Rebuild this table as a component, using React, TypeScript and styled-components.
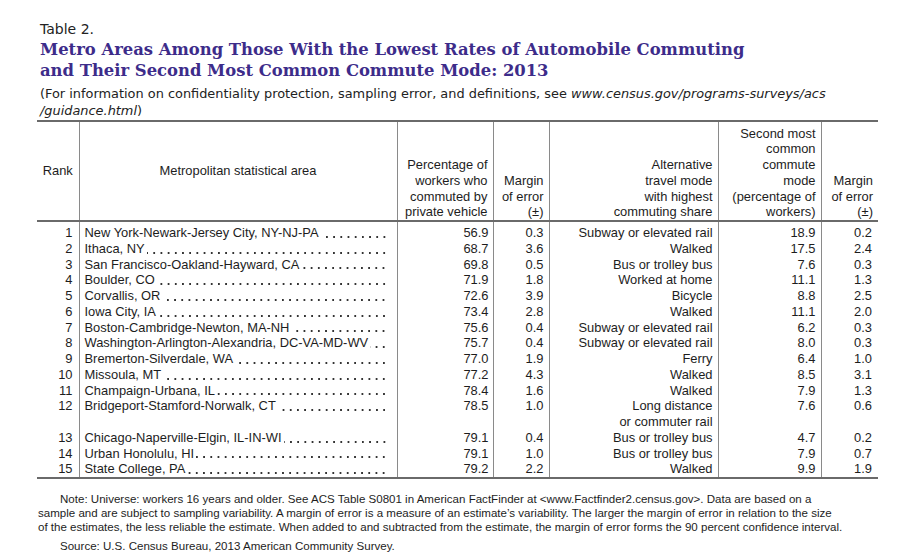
import React from "react";
import styled, { createGlobalStyle } from "styled-components";

const Global = createGlobalStyle`
  html, body { margin: 0; padding: 0; background: #ffffff; }
  body { font-family: "Liberation Sans", Arial, sans-serif; color: #1d1d1d; }
`;

const Page = styled.div`
  width: 920px;
  height: 558px;
  overflow: hidden;
  box-sizing: border-box;
  padding: 19px 0 0 37px;
`;

const Heading = styled.header`
  padding-left: 3px;
`;

const Label = styled.div`
  font-family: "DejaVu Sans", sans-serif;
  font-size: 14px;
  line-height: 20px;
  color: #222;
`;

const Title = styled.h1`
  margin: 0;
  font-family: "DejaVu Serif", serif;
  font-weight: bold;
  font-size: 16.4px;
  line-height: 21px;
  color: #3d2c8a;
`;

const Sub = styled.p`
  margin: 3.5px 0 0;
  font-family: "DejaVu Sans", sans-serif;
  font-size: 12.9px;
  line-height: 17px;
  color: #222;
  em { font-style: italic; }
`;

const Table = styled.table`
  margin-top: 1.5px;
  width: 841px;
  border-collapse: collapse;
  table-layout: fixed;
  border-top: 2px solid #6a6a6a;
  border-bottom: 2px solid #6a6a6a;
  font-size: 12.9px;
  line-height: 15.75px;
`;

const Col = styled.col<{ $w: number }>`
  width: ${(p) => p.$w}px;
`;

const HeadRow = styled.tr`
  border-bottom: 2px solid #6a6a6a;
`;

const Th = styled.th<{ $center?: boolean; $first?: boolean }>`
  height: 98px;
  padding: 0 ${(p) => (p.$center ? "0" : "5px")} 0 0;
  font-weight: normal;
  text-align: ${(p) => (p.$center ? "center" : "right")};
  vertical-align: ${(p) => (p.$center ? "middle" : "bottom")};
  border-left: ${(p) => (p.$first ? "none" : "1px solid #8a8a8a")};
`;

const Body = styled.tbody`
  tr:first-child td { padding-top: 3px; }
`;

const Td = styled.td<{ $first?: boolean; $pr?: number }>`
  padding: 0 ${(p) => p.$pr ?? 5}px 0 0;
  text-align: right;
  vertical-align: top;
  white-space: nowrap;
  border-left: ${(p) => (p.$first ? "none" : "1px solid #8a8a8a")};
`;

const AreaCell = styled.td`
  padding: 0 8px 0 5px;
  vertical-align: top;
  border-left: 1px solid #8a8a8a;
`;

const AreaLine = styled.div`
  display: flex;
  align-items: stretch;
  white-space: nowrap;
`;

const Leader = styled.span`
  flex: 1;
  margin-left: 2px;
  background-image: radial-gradient(circle, #333 0.95px, transparent 1.25px);
  background-size: 7.2px 4px;
  background-repeat: repeat-x;
  background-position: right 1px bottom 2px;
`;

const Notes = styled.div`
  margin-top: 13px;
  padding-left: 1px;
  font-size: 11.55px;
  line-height: 14px;
  color: #1d1d1d;
`;

const Para = styled.p<{ $gap?: number }>`
  margin: ${(p) => p.$gap ?? 0}px 0 0;
  text-indent: 22px;
  white-space: nowrap;
`;

type Row = [number, string, string, string, string[], string, string];

const rows: Row[] = [
  [1, "New York-Newark-Jersey City, NY-NJ-PA", "56.9", "0.3", ["Subway or elevated rail"], "18.9", "0.2"],
  [2, "Ithaca, NY", "68.7", "3.6", ["Walked"], "17.5", "2.4"],
  [3, "San Francisco-Oakland-Hayward, CA", "69.8", "0.5", ["Bus or trolley bus"], "7.6", "0.3"],
  [4, "Boulder, CO", "71.9", "1.8", ["Worked at home"], "11.1", "1.3"],
  [5, "Corvallis, OR", "72.6", "3.9", ["Bicycle"], "8.8", "2.5"],
  [6, "Iowa City, IA", "73.4", "2.8", ["Walked"], "11.1", "2.0"],
  [7, "Boston-Cambridge-Newton, MA-NH", "75.6", "0.4", ["Subway or elevated rail"], "6.2", "0.3"],
  [8, "Washington-Arlington-Alexandria, DC-VA-MD-WV", "75.7", "0.4", ["Subway or elevated rail"], "8.0", "0.3"],
  [9, "Bremerton-Silverdale, WA", "77.0", "1.9", ["Ferry"], "6.4", "1.0"],
  [10, "Missoula, MT", "77.2", "4.3", ["Walked"], "8.5", "3.1"],
  [11, "Champaign-Urbana, IL", "78.4", "1.6", ["Walked"], "7.9", "1.3"],
  [12, "Bridgeport-Stamford-Norwalk, CT", "78.5", "1.0", ["Long distance", "or commuter rail"], "7.6", "0.6"],
  [13, "Chicago-Naperville-Elgin, IL-IN-WI", "79.1", "0.4", ["Bus or trolley bus"], "4.7", "0.2"],
  [14, "Urban Honolulu, HI", "79.1", "1.0", ["Bus or trolley bus"], "7.9", "0.7"],
  [15, "State College, PA", "79.2", "2.2", ["Walked"], "9.9", "1.9"],
];

const lines = (parts: string[]) =>
  parts.map((p, i) => (
    <React.Fragment key={i}>
      {i > 0 && <br />}
      {p}
    </React.Fragment>
  ));

export default function App() {
  return (
    <>
      <Global />
      <Page>
        <Heading>
          <Label>Table 2.</Label>
          <Title>
            Metro Areas Among Those With the Lowest Rates of Automobile Commuting
            <br />
            and Their Second Most Common Commute Mode: 2013
          </Title>
          <Sub>
            (For information on confidentiality protection, sampling error, and definitions, see{" "}
            <em>www.census.gov/programs-surveys/acs</em>
            <br />
            <em>/guidance.html</em>)
          </Sub>
        </Heading>
        <Table>
          <colgroup>
            <Col $w={42} />
            <Col $w={318} />
            <Col $w={96} />
            <Col $w={56} />
            <Col $w={169} />
            <Col $w={103} />
            <Col $w={57} />
          </colgroup>
          <thead>
            <HeadRow>
              <Th $center $first>Rank</Th>
              <Th $center>Metropolitan statistical area</Th>
              <Th>{lines(["Percentage of", "workers who", "commuted by", "private vehicle"])}</Th>
              <Th>{lines(["Margin", "of error", "(±)"])}</Th>
              <Th>{lines(["Alternative", "travel mode", "with highest", "commuting share"])}</Th>
              <Th>{lines(["Second most", "common", "commute", "mode", "(percentage of", "workers)"])}</Th>
              <Th>{lines(["Margin", "of error", "(±)"])}</Th>
            </HeadRow>
          </thead>
          <Body>
            {rows.map((r) => (
              <tr key={r[0]}>
                <Td $first $pr={6}>{r[0]}</Td>
                <AreaCell>
                  <AreaLine>
                    <span>{r[1]}</span>
                    <Leader />
                  </AreaLine>
                </AreaCell>
                <Td $pr={4}>{r[2]}</Td>
                <Td>{r[3]}</Td>
                <Td>{lines(r[4])}</Td>
                <Td>{r[5]}</Td>
                <Td $pr={6}>{r[6]}</Td>
              </tr>
            ))}
          </Body>
        </Table>
        <Notes>
          <Para>
            Note: Universe: workers 16 years and older. See ACS Table S0801 in American FactFinder at &lt;www.Factfinder2.census.gov&gt;. Data are based on a
            <br />
            sample and are subject to sampling variability. A margin of error is a measure of an estimate’s variability. The larger the margin of error in relation to the size
            <br />
            of the estimates, the less reliable the estimate. When added to and subtracted from the estimate, the margin of error forms the 90 percent confidence interval.
          </Para>
          <Para $gap={5}>Source: U.S. Census Bureau, 2013 American Community Survey.</Para>
        </Notes>
      </Page>
    </>
  );
}
